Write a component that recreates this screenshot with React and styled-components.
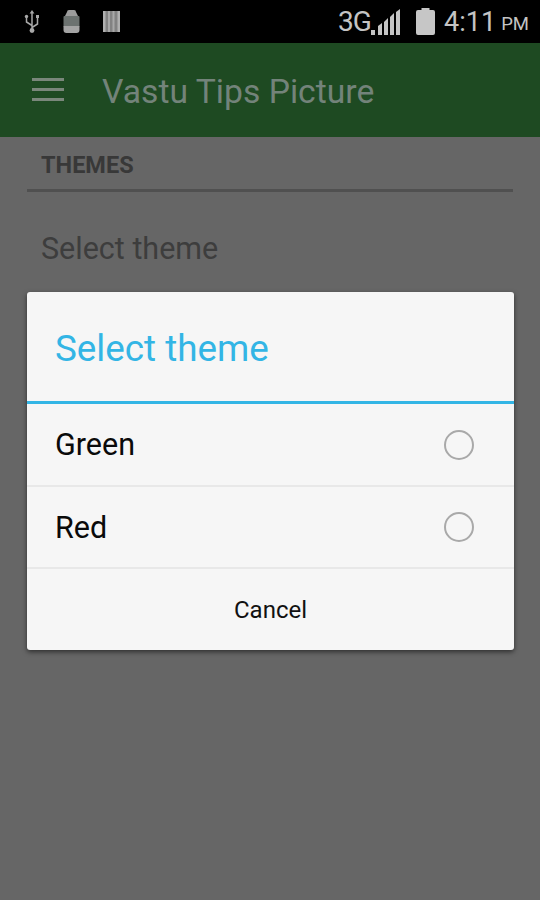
import React from "react";
import styled, { createGlobalStyle } from "styled-components";

const GlobalStyle = createGlobalStyle`
  html, body {
    margin: 0;
    padding: 0;
    background: #666666;
  }
  body {
    font-family: Roboto, "Liberation Sans", sans-serif;
  }
`;

const Screen = styled.div`
  position: relative;
  width: 540px;
  height: 900px;
  overflow: hidden;
  background: #666666;
`;

const StatusBar = styled.div`
  display: flex;
  align-items: center;
  justify-content: space-between;
  height: 43px;
  padding: 0 11px 0 24px;
  box-sizing: border-box;
  background: #000000;
`;

const StatusLeft = styled.div`
  display: flex;
  align-items: center;
  gap: 23px;
`;

const StatusRight = styled.div`
  display: flex;
  align-items: center;
  color: #c4c4c4;
`;

const NetworkLabel = styled.span`
  font-size: 28px;
  letter-spacing: -0.8px;
`;

const BatterySlot = styled.span`
  display: flex;
  margin-left: 15px;
`;

const Clock = styled.span`
  margin-left: 9px;
  font-size: 27px;
`;

const Meridiem = styled.span`
  margin-left: 5px;
  margin-top: 5px;
  font-size: 18.5px;
`;

const AppBar = styled.header`
  display: flex;
  align-items: center;
  height: 94px;
  padding-left: 32px;
  box-sizing: border-box;
  background: #1e4a22;
`;

const Title = styled.h1`
  margin: 2px 0 0 38px;
  font-size: 33.7px;
  font-weight: 400;
  color: #73837a;
`;

const Content = styled.main`
  padding: 0 27px;
`;

const SectionHead = styled.div`
  padding: 14px 14px 10px;
  border-bottom: 3px solid #505050;
  font-size: 23.5px;
  font-weight: 700;
  color: #383838;
`;

const Setting = styled.div`
  padding: 39px 14px 0;
  font-size: 30.5px;
  color: #3d3d3d;
`;

const Dialog = styled.section`
  position: absolute;
  top: 292px;
  left: 27px;
  width: 487px;
  border-radius: 3px;
  overflow: hidden;
  background: #f6f6f6;
  box-shadow: 0 2px 5px rgba(0, 0, 0, 0.55);
`;

const DialogTitle = styled.h2`
  display: flex;
  align-items: center;
  height: 112px;
  margin: 0;
  padding: 4px 0 0 28px;
  box-sizing: border-box;
  border-bottom: 3px solid #33b5e5;
  font-size: 36.8px;
  font-weight: 400;
  color: #33b5e5;
`;

const Option = styled.div`
  display: flex;
  align-items: center;
  justify-content: space-between;
  height: ${(props) => props.$height}px;
  padding: 0 40px 0 28px;
  box-sizing: border-box;
  border-bottom: 2px solid #e8e8e8;
  font-size: 30.5px;
  color: #0a0a0a;
`;

const Radio = styled.span`
  width: 30px;
  height: 30px;
  box-sizing: border-box;
  border: 2px solid #a9a9a9;
  border-radius: 50%;
`;

const CancelButton = styled.button`
  display: block;
  width: 100%;
  height: 81px;
  padding: 0;
  border: 0;
  background: transparent;
  font-family: inherit;
  font-size: 24px;
  color: #111111;
`;

function UsbIcon() {
  return (
    <svg width="16" height="23" viewBox="0 0 16 23" fill="none" stroke="#a8a8a8" strokeWidth="1.5">
      <path d="M8 2v18M8 15.5L2.5 12V7.5M8 17.5l5.5-3.5V7.5" />
      <path d="M8 0l2.4 3.5H5.6z" fill="#a8a8a8" stroke="none" />
      <circle cx="2.5" cy="6.5" r="1.7" fill="#a8a8a8" stroke="none" />
      <rect x="12" y="5" width="3" height="3" fill="#a8a8a8" stroke="none" />
      <circle cx="8" cy="20.5" r="2.4" fill="#a8a8a8" stroke="none" />
    </svg>
  );
}

function AppIcon() {
  return (
    <svg width="17" height="23" viewBox="0 0 17 23">
      <path d="M4 2a2 2 0 0 1 2-2h5a2 2 0 0 1 2 2l2 4H2z" fill="#9c9c9c" />
      <rect x="0.5" y="6" width="16" height="11" rx="1" fill="#6c7270" />
      <path d="M0.5 16h16v4a3 3 0 0 1-3 3h-10a3 3 0 0 1-3-3z" fill="#a4a4a4" />
    </svg>
  );
}

function BarcodeIcon() {
  return (
    <svg width="17" height="21" viewBox="0 0 17 21">
      <rect width="17" height="21" fill="#828282" />
      <rect x="0" width="2.5" height="21" fill="#b0b0b0" />
      <rect x="5" width="2" height="21" fill="#a8a8a8" />
      <rect x="9.5" width="2" height="21" fill="#a8a8a8" />
      <rect x="14.5" width="2.5" height="21" fill="#b0b0b0" />
    </svg>
  );
}

function SignalIcon() {
  return (
    <svg width="30" height="26" viewBox="0 0 30 26" fill="#c4c4c4">
      <rect x="0" y="21" width="4" height="5" />
      <path d="M7 17l4-3v12H7z" />
      <path d="M13 13l4-4v17h-4z" />
      <path d="M19 8l4-4v22h-4z" />
      <path d="M25 3l4-3v26h-4z" />
    </svg>
  );
}

function BatteryIcon() {
  return (
    <svg width="19" height="27" viewBox="0 0 19 27" fill="#c6c6c6">
      <path d="M5.5 0h8v2h3.5a2 2 0 0 1 2 2v21a2 2 0 0 1-2 2H2a2 2 0 0 1-2-2V4a2 2 0 0 1 2-2h3.5z" />
    </svg>
  );
}

function MenuIcon() {
  return (
    <svg width="32" height="24" viewBox="0 0 32 24" fill="#7a877b">
      <rect x="0" y="0" width="32" height="3" />
      <rect x="0" y="10" width="32" height="3" />
      <rect x="0" y="20" width="32" height="3" />
    </svg>
  );
}

const options = [
  { name: "Green", height: 83 },
  { name: "Red", height: 82 },
];

export default function App() {
  return (
    <Screen>
      <GlobalStyle />
      <StatusBar>
        <StatusLeft>
          <UsbIcon />
          <AppIcon />
          <BarcodeIcon />
        </StatusLeft>
        <StatusRight>
          <NetworkLabel>3G</NetworkLabel>
          <SignalIcon />
          <BatterySlot>
            <BatteryIcon />
          </BatterySlot>
          <Clock>4:11</Clock>
          <Meridiem>PM</Meridiem>
        </StatusRight>
      </StatusBar>
      <AppBar>
        <MenuIcon />
        <Title>Vastu Tips Picture</Title>
      </AppBar>
      <Content>
        <SectionHead>THEMES</SectionHead>
        <Setting>Select theme</Setting>
      </Content>
      <Dialog>
        <DialogTitle>Select theme</DialogTitle>
        {options.map((option) => (
          <Option key={option.name} $height={option.height}>
            {option.name}
            <Radio />
          </Option>
        ))}
        <CancelButton>Cancel</CancelButton>
      </Dialog>
    </Screen>
  );
}
